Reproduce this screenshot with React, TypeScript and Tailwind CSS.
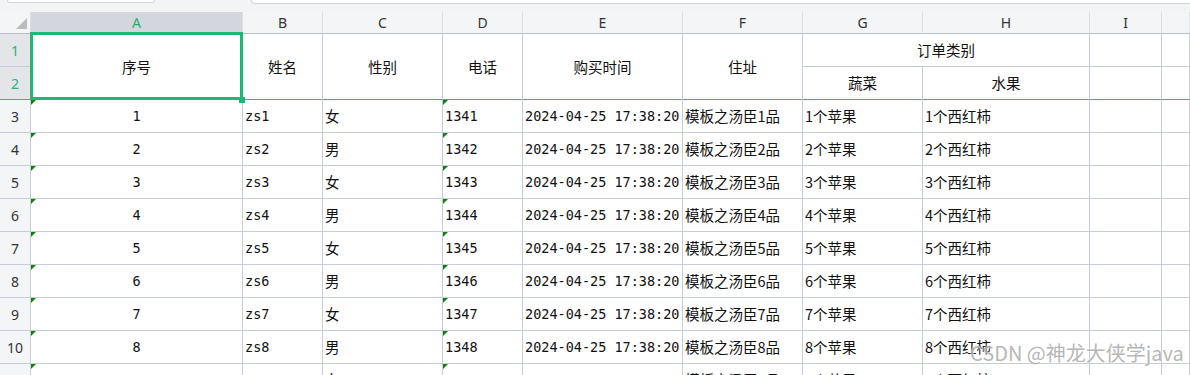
import React from "react"

const grid = "grid grid-cols-[31px_212px_80px_120px_80px_160px_120px_120px_167px_72px_1fr] grid-rows-[22px_repeat(12,33px)]"
const cjk = "font-['Noto_Sans_CJK_SC',sans-serif] text-[14.5px] text-[#111]"
const mono = "font-['DejaVu_Sans_Mono','Noto_Sans_CJK_SC',monospace] text-[13.5px] text-[#111]"
const line = "border-r border-b border-[#c6ccda]"

function Tri() {
  return <span className="absolute left-0 top-0 w-0 h-0 border-t-[5px] border-r-[5px] border-t-[#137f13] border-r-transparent" />
}

function ColHead({ label, active }: { label: string; active?: boolean }) {
  return (
    <div
      className={
        "flex items-center justify-center border-r border-b border-r-[#dcdfe6] border-b-[#b8bdca] font-['Noto_Sans',sans-serif] text-[14px] " +
        (active ? "bg-[#d3d6dd] text-[#1fae70]" : "bg-[#f4f5f7] text-[#333]")
      }
    >
      {label}
    </div>
  )
}

function RowHead({ n, active, freeze }: { n: number; active?: boolean; freeze?: boolean }) {
  return (
    <div
      className={
        "flex items-center justify-center border-r border-b font-['Noto_Sans',sans-serif] text-[14px] " +
        (freeze ? "border-r-[#c6ccda] border-b-[#3db37f] " : "border-[#c6ccda] ") +
        (active ? "bg-[#e3e5e9] text-[#2bb37a]" : "bg-[#f4f5f7] text-[#333]")
      }
    >
      {n}
    </div>
  )
}

export default function App() {
  const rows = [1, 2, 3, 4, 5, 6, 7, 8, 9]
  const merged = ["序号", "姓名", "性别", "电话", "购买时间", "住址"]

  return (
    <div className="relative w-[1190px] h-[375px] overflow-hidden bg-white">
      {/* top strip */}
      <div className="flex h-[12px] bg-[#f3f4f6]">
        <div className="ml-[7px] w-[148px] h-[3px] bg-white border border-t-0 border-[#d3d6dc] rounded-b-[3px]" />
        <div className="ml-[96px] flex-1 h-[4px] bg-white border border-t-0 border-r-0 border-[#d3d6dc] rounded-bl-[3px]" />
      </div>

      <div className={grid}>
        {/* column letters */}
        <div className="flex items-end justify-end pr-[3px] pb-[4px] bg-[#f4f5f7] border-r border-b border-r-[#dcdfe6] border-b-[#b8bdca]">
          <svg width="11" height="11" viewBox="0 0 11 11">
            <polygon points="11,0 11,11 0,11" fill="#bcbcbc" />
          </svg>
        </div>
        <ColHead label="A" active />
        {["B", "C", "D", "E", "F", "G", "H", "I", ""].map((c, i) => (
          <ColHead key={i} label={c} />
        ))}

        {/* row 1 */}
        <RowHead n={1} active />
        {merged.map((t) => (
          <div key={t} className={"row-span-2 flex items-center justify-center border-r border-b border-r-[#c6ccda] border-b-[#3db37f] " + cjk}>
            {t}
          </div>
        ))}
        <div className={"col-span-2 flex items-center justify-center " + line + " " + cjk}>订单类别</div>
        <div className={line} />
        <div className={line} />

        {/* row 2 */}
        <RowHead n={2} active freeze />
        <div className={"flex items-center justify-center border-r border-b border-r-[#c6ccda] border-b-[#3db37f] " + cjk}>蔬菜</div>
        <div className={"flex items-center justify-center border-r border-b border-r-[#c6ccda] border-b-[#3db37f] " + cjk}>水果</div>
        <div className="border-r border-b border-r-[#c6ccda] border-b-[#3db37f]" />
        <div className="border-r border-b border-r-[#c6ccda] border-b-[#3db37f]" />

        {/* data rows */}
        {rows.map((i) => (
          <React.Fragment key={i}>
            <RowHead n={i + 2} />
            <div className={"relative flex items-center justify-center " + line + " " + mono}>
              <Tri />
              {i}
            </div>
            <div className={"flex items-center pl-[2px] " + line + " " + mono}>zs{i}</div>
            <div className={"flex items-center pl-[2px] " + line + " " + cjk}>{i % 2 === 1 ? "女" : "男"}</div>
            <div className={"relative flex items-center pl-[2px] " + line + " " + mono}>
              <Tri />
              134{i}
            </div>
            <div className={"flex items-center pl-[2px] whitespace-nowrap " + line + " " + mono}>2024-04-25 17:38:20</div>
            <div className={"flex items-center pl-[2px] " + line + " " + cjk}>模板之汤臣{i}品</div>
            <div className={"flex items-center pl-[2px] " + line + " " + cjk}>{i}个苹果</div>
            <div className={"flex items-center pl-[2px] " + line + " " + cjk}>{i}个西红柿</div>
            <div className={line} />
            <div className={line} />
          </React.Fragment>
        ))}
      </div>

      {/* selection A1:A2 */}
      <div className="absolute left-[30px] top-[32px] w-[213px] h-[68px] border-[3px] border-[#22b576]" />
      <div className="absolute left-[239px] top-[97px] w-[6px] h-[6px] bg-[#22b576]" />

      {/* watermark */}
      <div className="absolute left-[970px] top-[338px] font-['Noto_Sans_CJK_SC',sans-serif] text-[20px] text-[#a3a3a3]/80 whitespace-nowrap [text-shadow:0_0_2px_#fff]">
        CSDN @神龙大侠学java
      </div>
    </div>
  )
}
